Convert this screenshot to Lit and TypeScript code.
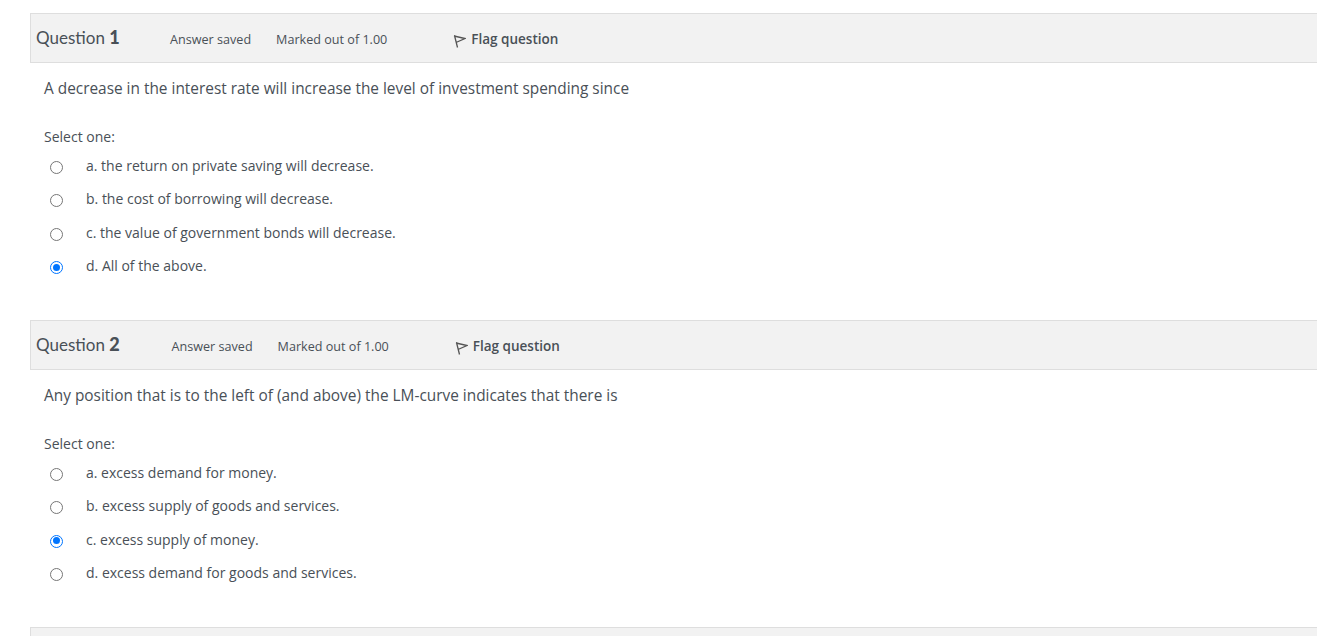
import { LitElement, html, css } from "lit";
import { customElement } from "lit/decorators.js";

const questions = [
  {
    n: 1,
    text: "A decrease in the interest rate will increase the level of investment spending since",
    options: ["a. the return on private saving will decrease.", "b. the cost of borrowing will decrease.", "c. the value of government bonds will decrease.", "d. All of the above."],
    sel: 3,
  },
  {
    n: 2,
    text: "Any position that is to the left of (and above) the LM-curve indicates that there is",
    options: ["a. excess demand for money.", "b. excess supply of goods and services.", "c. excess supply of money.", "d. excess demand for goods and services."],
    sel: 2,
  },
];

@customElement("app-root")
export class AppRoot extends LitElement {
  static styles = css`
    :host { display: block; height: 636px; overflow: hidden; background: #fff; font-family: "Open Sans", sans-serif; color: #495057; }
    .page { padding: 13px 0 0 30px; }
    .q { height: 307px; }
    .head { display: flex; align-items: center; height: 48px; width: 1400px; padding-left: 5px; background: #f2f2f2; border: 1px solid #dedede; border-right: 0; }
    .title { font-family: "Lato", sans-serif; font-size: 17px; margin-right: 50.4px; position: relative; top: -1px; }
    .title b { font-weight: 900; font-size: 18px; }
    .title.wide { margin-right: 51.9px; }
    .info { font-size: 12.6px; margin-right: 25px; position: relative; top: 1px; }
    .marked { margin-right: 66px; }
    .flag { display: flex; align-items: center; font-size: 13.5px; font-weight: 600; position: relative; top: 1px; }
    .flag svg { margin-right: 5px; margin-top: 4px; }
    .body { padding-left: 14px; }
    .text { font-size: 15.4px; line-height: 20px; margin-top: 15px; height: 38px; padding-top: 1px; margin-bottom: 10px; }
    .sel { font-size: 14px; line-height: 18px; margin-bottom: 2.5px; padding-top: 1px; }
    .opt { display: flex; align-items: center; height: 33.5px; font-size: 14px; }
    .radio { width: 13px; height: 13px; margin: 4px 23px 0 6px; box-sizing: border-box; border: 1px solid #767676; border-radius: 50%; background: #fff; flex: none; }
    .radio.on { border: 1.5px solid #0075ff; padding: 1.5px; }
    .radio.on::after { content: ""; display: block; width: 7px; height: 7px; border-radius: 50%; background: #0075ff; }
  `;
  render() {
    return html`<div class="page">
      ${questions.map(
        (q) => html`<section class="q">
          <div class="head">
            <span class="title ${q.n === 2 ? "wide" : ""}">Question <b>${q.n}</b></span>
            <span class="info">Answer saved</span>
            <span class="info marked">Marked out of 1.00</span>
            <span class="flag">
              <svg width="13" height="14" viewBox="0 0 13 14" fill="none" stroke="#555" stroke-width="1.3"><path d="M1.5 1.5 4.5 13.5M1 2 12 4.5 3 8.5"/></svg>
              Flag question
            </span>
          </div>
          <div class="body">
            <div class="text">${q.text}</div>
            <div class="sel">Select one:</div>
            ${q.options.map(
              (o, i) => html`<div class="opt"><span class="radio ${i === q.sel ? "on" : ""}"></span><span>${o}</span></div>`
            )}
          </div>
        </section>`
      )}
      <section class="q"><div class="head"></div></section>
    </div>`;
  }
}
